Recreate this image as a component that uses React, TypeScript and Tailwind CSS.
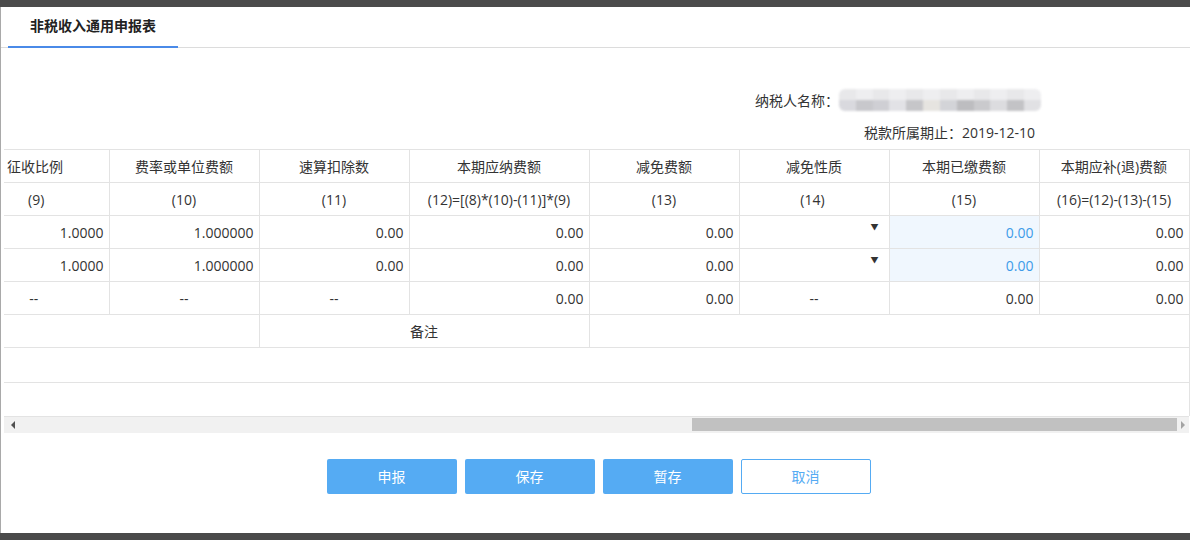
const font = "font-['Open_Sans','Noto_Sans_CJK_SC',sans-serif]";

const cols = [105, 150, 150, 180, 150, 150, 150, 150];

const headers = ["征收比例", "费率或单位费额", "速算扣除数", "本期应纳费额", "减免费额", "减免性质", "本期已缴费额", "本期应补(退)费额"];
const codes = ["(9)", "(10)", "(11)", "(12)=[(8)*(10)-(11)]*(9)", "(13)", "(14)", "(15)", "(16)=(12)-(13)-(15)"];

const base = "border border-[#e3e3e3] h-[33px] p-0 text-[14px]";
const cell = `${base} text-[#333]`;

function DataRow() {
  return (
    <tr>
      <td className={`${cell} border-l-0 text-right pr-[5px]`}>1.0000</td>
      <td className={`${cell} text-right pr-[5px]`}>1.000000</td>
      <td className={`${cell} text-right pr-[5px]`}>0.00</td>
      <td className={`${cell} text-right pr-[5px]`}>0.00</td>
      <td className={`${cell} text-right pr-[5px]`}>0.00</td>
      <td className={`${cell} relative`}>
        <span className="absolute right-[10px] top-[5px] text-[8px] text-[#333]">▼</span>
      </td>
      <td className={`${base} text-right pr-[5px] bg-[#f0f7fe] text-[#3d9be9]`}>0.00</td>
      <td className={`${cell} text-right pr-[5px]`}>0.00</td>
    </tr>
  );
}

function Blurred() {
  const shades = ["#d9d9de", "#c8c8cc", "#cfcfd4", "#e2e2e6", "#c6c6c9", "#e6e4e0", "#d3d4d8", "#bdbdc0", "#cacacd", "#dcdcdf", "#c3c3c6", "#e1e1e4"];
  return (
    <div className="flex h-[22px] w-[202px] overflow-hidden rounded-[6px] blur-[1px]">
      {shades.map((c, i) => (
        <div key={i} className="flex-1 flex flex-col">
          <div className="flex-1" style={{ background: i % 2 ? "#eeeef0" : "#e8e8ea" }} />
          <div className="flex-1" style={{ background: c }} />
        </div>
      ))}
    </div>
  );
}

export default function App() {
  return (
    <div className={`w-[1190px] h-[540px] bg-[#4a4a4a] flex flex-col overflow-hidden ${font}`}>
      <div className="h-[7px] shrink-0 bg-[#4b4b4b]" />
      <div className="h-[526px] bg-white border-l border-[#a9a9a9] flex flex-col">
        {/* tabs */}
        <div className="h-[41px] border-b border-[#dcdcdc] flex items-end shrink-0">
          <div className="ml-[7px] w-[170px] h-[41px] border-b-2 border-[#4a8ae8] flex items-center justify-center text-[14px] font-bold text-[#222] -mb-px pb-[2px]">
            非税收入通用申报表
          </div>
        </div>

        {/* info */}
        <div className="flex flex-col items-end pr-[149px] pt-[41px] text-[14px] text-[#333]">
          <div className="flex items-center h-[22px]">
            <span>纳税人名称：</span>
            <Blurred />
          </div>
          <div className="mt-[11px] mr-[6px] h-[20px] flex items-center">税款所属期止：2019-12-10</div>
        </div>

        {/* table */}
        <div className="mt-[7px] ml-[3px]">
          <table className="border-collapse table-fixed w-[1185px]">
            <colgroup>
              {cols.map((w, i) => (
                <col key={i} style={{ width: w }} />
              ))}
            </colgroup>
            <tbody>
              <tr>
                {headers.map((h, i) => (
                  <td key={i} className={`${cell} text-center ${i === 0 ? "border-l-0 text-left pl-[3px]" : ""}`}>
                    {h}
                  </td>
                ))}
              </tr>
              <tr>
                {codes.map((h, i) => (
                  <td key={i} className={`${cell} text-center ${i === 0 ? "border-l-0 pr-[40px]" : ""} ${i === 5 ? "pr-[3px]" : ""}`}>
                    {h}
                  </td>
                ))}
              </tr>
              <DataRow />
              <DataRow />
              <tr>
                <td className={`${cell} border-l-0 text-center pr-[45px]`}>--</td>
                <td className={`${cell} text-center`}>--</td>
                <td className={`${cell} text-center`}>--</td>
                <td className={`${cell} text-right pr-[5px]`}>0.00</td>
                <td className={`${cell} text-right pr-[5px]`}>0.00</td>
                <td className={`${cell} text-center`}>--</td>
                <td className={`${cell} text-right pr-[5px]`}>0.00</td>
                <td className={`${cell} text-right pr-[5px]`}>0.00</td>
              </tr>
              <tr>
                <td colSpan={2} className={`${cell} border-l-0`} />
                <td colSpan={2} className={`${cell} text-center`}>备注</td>
                <td colSpan={4} className={cell} />
              </tr>
              <tr>
                <td colSpan={8} className={`${cell} border-l-0 h-[35px]`} />
              </tr>
              <tr>
                <td colSpan={8} className={`${cell} border-l-0 border-b-0`} />
              </tr>
            </tbody>
          </table>
          {/* horizontal scrollbar */}
          <div className="w-[1185px] h-[17px] bg-[#f1f1f1] border-t border-[#e3e3e3] flex items-center">
            <div className="w-[17px] h-full flex items-center justify-center">
              <div className="w-0 h-0 border-y-[4px] border-y-transparent border-r-[4px] border-r-[#505050]" />
            </div>
            <div className="ml-[671px] w-[485px] h-[13px] bg-[#c1c1c1]" />
            <div className="flex-1 h-full flex items-center justify-center">
              <div className="w-0 h-0 border-y-[4px] border-y-transparent border-l-[4px] border-l-[#a3a3a3]" />
            </div>
          </div>
        </div>

        {/* buttons */}
        <div className="mt-[26px] flex justify-center gap-[8px] pl-[6px]">
          <button className="w-[130px] h-[35px] rounded-[2px] bg-[#55abf3] text-white text-[14px]">申报</button>
          <button className="w-[130px] h-[35px] rounded-[2px] bg-[#55abf3] text-white text-[14px]">保存</button>
          <button className="w-[130px] h-[35px] rounded-[2px] bg-[#55abf3] text-white text-[14px]">暂存</button>
          <button className="w-[130px] h-[35px] rounded-[2px] bg-white border border-[#55abf3] text-[#55abf3] text-[14px]">取消</button>
        </div>
      </div>
      <div className="flex-1 bg-[#4a4a4a]" />
    </div>
  );
}
